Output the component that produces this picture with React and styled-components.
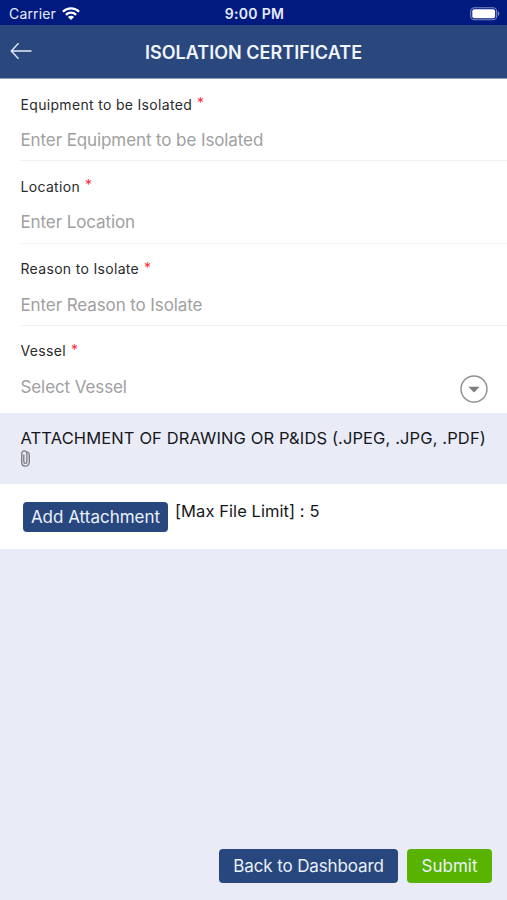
import styled, { createGlobalStyle } from "styled-components"

const GlobalStyle=createGlobalStyle`
*{
  box-sizing:border-box;
}
body{
  margin:0;
  background-color:#e9ebf7;
  font-family:Inter,"Liberation Sans",sans-serif;
}
`;
const Container=styled.div`
width:100%;
height:900px;
display:flex;
flex-direction:column;
overflow:hidden;
background-color:#e9ebf7;
color:#16171b;
`;
const StatusBar=styled.div`
height:25px;
flex:none;
display:grid;
grid-template-columns:1fr auto 1fr;
align-items:center;
padding:3px 7px 0px 9px;
background-color:#001a80;
color:#e6ebfa;
`;
const Carrier=styled.div`
display:flex;
align-items:center;
gap:6px;
font-size:14px;
line-height:20px;
letter-spacing:0.15px;
`;
const Clock=styled.div`
font-size:14px;
font-weight:600;
line-height:20px;
letter-spacing:0.3px;
`;
const Battery=styled.svg`
justify-self:end;
`;
const Header=styled.header`
height:54px;
flex:none;
display:grid;
grid-template-columns:40px 1fr 40px;
align-items:center;
background-color:#2a487d;
border-bottom:1px solid #8d9cc0;
`;
const BackLink=styled.a`
display:flex;
padding:0px 0px 1px 10px;
`;
const Title=styled.h1`
margin:0;
padding-top:2px;
text-align:center;
font-weight:600;
font-size:18px;
line-height:24px;
letter-spacing:0.03px;
color:#f1f5fd;
`;
const Form=styled.form`
flex:none;
height:334px;
padding:0px 0px 0px 20.5px;
background-color:white;
`;
const Field=styled.div`
height:${(props) => (props.$last ? "87px" : "82.3px")};
padding-top:15.5px;
border-bottom:${(props) => (props.$last ? "none" : "1px solid #f0f0f2")};
`;
const Label=styled.label`
display:block;
font-size:14px;
line-height:20px;
letter-spacing:0.32px;
color:#2b2b2d;
`;
const Required=styled.span`
margin-left:5px;
line-height:1;
vertical-align:1.5px;
color:#f5303c;
`;
const InputRow=styled.div`
display:flex;
justify-content:space-between;
align-items:flex-start;
padding:13.5px 19px 0px 0px;
`;
const Placeholder=styled.span`
font-size:17px;
line-height:24px;
letter-spacing:-0.1px;
color:#a0a0a1;
`;
const Section=styled.section`
flex:none;
height:71px;
padding:13px 0px 0px 20.5px;
`;
const SectionTitle=styled.h2`
margin:0;
font-weight:400;
font-size:16.5px;
line-height:24px;
letter-spacing:0.12px;
white-space:nowrap;
`;
const AttachmentRow=styled.div`
flex:none;
height:65px;
display:flex;
align-items:flex-start;
gap:7px;
padding:18px 0px 0px 23px;
background-color:white;
`;
const Button=styled.button`
width:${(props) => props.$width};
height:${(props) => props.$height || "34px"};
border:none;
border-radius:4px;
padding:0;
font-family:inherit;
font-size:17px;
line-height:24px;
letter-spacing:${(props) => props.$spacing || "0px"};
white-space:nowrap;
background-color:${(props) => props.$color || "#28477f"};
color:#eaf1fb;
cursor:pointer;
`;
const Limit=styled.span`
font-size:16.5px;
line-height:18px;
letter-spacing:0.07px;
`;
const Footer=styled.footer`
margin-top:auto;
display:flex;
justify-content:flex-end;
gap:9px;
padding:0px 15px 17px 0px;
`;

const fields = [
  { label: "Equipment to be Isolated", placeholder: "Enter Equipment to be Isolated" },
  { label: "Location", placeholder: "Enter Location" },
  { label: "Reason to Isolate", placeholder: "Enter Reason to Isolate" },
  { label: "Vessel", placeholder: "Select Vessel", select: true },
];

const WifiIcon = () => (
  <svg width="18" height="14" viewBox="0 0 18 14" fill="none" stroke="#fff" strokeWidth="2.3">
    <path d="M.9 4.7C5.5.2 12.5.2 17.1 4.7" />
    <path d="M3.9 7.8C6.8 5 11.2 5 14.1 7.8" />
    <path d="M9 13.1 5.9 9.9C7.7 8.3 10.3 8.3 12.1 9.9Z" fill="#fff" stroke="none" />
  </svg>
)

const BatteryIcon = () => (
  <Battery width="31" height="14" viewBox="0 0 31 14">
    <rect x="1.7" y=".7" width="26" height="12" rx="3.8" fill="none" stroke="#7f8cc4" strokeWidth="1.1" />
    <rect x="3.3" y="2.2" width="22.8" height="9" rx="2" fill="#fff" />
    <path d="M29 4.5C30.8 5.1 30.8 8.3 29 8.9Z" fill="#7f8cc4" />
  </Battery>
)

const ArrowIcon = () => (
  <svg width="22" height="18" viewBox="0 0 22 18" fill="none" stroke="#e3ebf8" strokeWidth="1.4">
    <path d="M21.5 9H1.5M8.5 1.3 1.3 9 8.5 16.7" />
  </svg>
)

const DropdownIcon = () => (
  <svg width="28" height="28" viewBox="0 0 28 28">
    <circle cx="14" cy="14" r="13" fill="#fff" stroke="#8e8e90" strokeWidth="1.4" />
    <path d="M8.3 11.7H19.7L14 17.6Z" fill="#7e7e80" />
  </svg>
)

const ClipIcon = () => (
  <svg width="10" height="17" viewBox="0 0 10 17" fill="none" stroke="#77787e" strokeWidth="1.3" strokeLinecap="round">
    <path d="M2.8 4.8V11.5C2.8 14 5.9 14 5.9 11.5V4C5.9-.2.7-.2.7 4V12C.7 17.6 8.3 17.6 8.3 12V4.8C8.3 3.2 7.6 2.4 6.6 2" />
  </svg>
)

const App = () => {
  return (
    <Container>
        <GlobalStyle/>
        <StatusBar>
            <Carrier>Carrier <WifiIcon/></Carrier>
            <Clock>9:00 PM</Clock>
            <BatteryIcon/>
        </StatusBar>
        <Header>
            <BackLink><ArrowIcon/></BackLink>
            <Title>ISOLATION CERTIFICATE</Title>
        </Header>
        <Form>
            {fields.map((field) => (
              <Field key={field.label} $last={field.select}>
                  <Label>{field.label}<Required>*</Required></Label>
                  <InputRow>
                      <Placeholder>{field.placeholder}</Placeholder>
                      {field.select && <DropdownIcon/>}
                  </InputRow>
              </Field>
            ))}
        </Form>
        <Section>
            <SectionTitle>ATTACHMENT OF DRAWING OR P&amp;IDS (.JPEG, .JPG, .PDF)</SectionTitle>
            <ClipIcon/>
        </Section>
        <AttachmentRow>
            <Button type="button" $width="145px" $height="30px">Add Attachment</Button>
            <Limit>[Max File Limit] : 5</Limit>
        </AttachmentRow>
        <Footer>
            <Button type="button" $width="179px" $spacing="-0.12px">Back to Dashboard</Button>
            <Button type="button" $width="85px" $color="#57b300">Submit</Button>
        </Footer>
    </Container>
  )
}

export default App
